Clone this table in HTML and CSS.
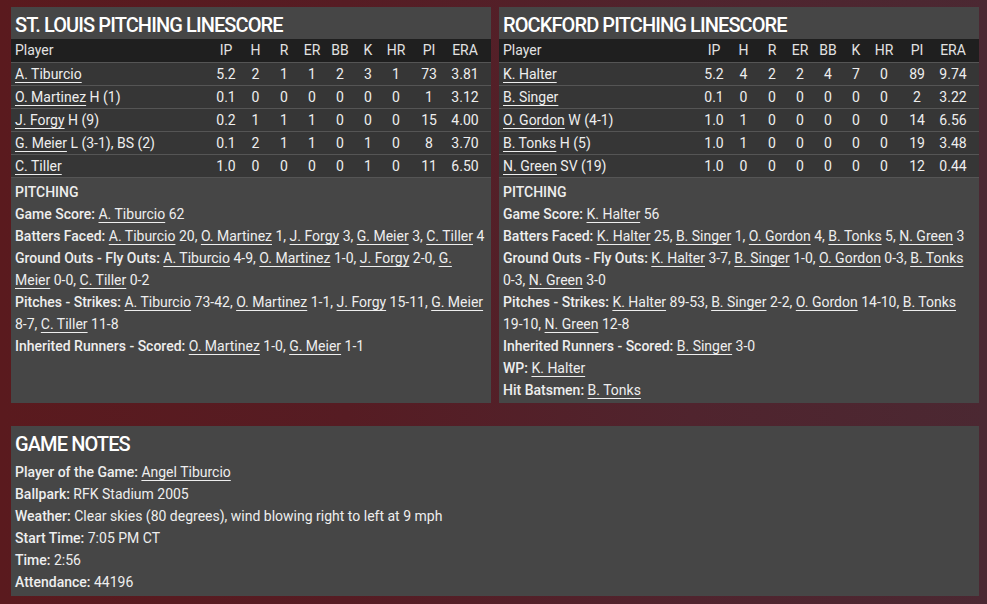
FILE: index.html
```html
<!DOCTYPE html>
<html lang="en">
<head>
<meta charset="utf-8">
<title>Pitching Linescore</title>
<link rel="stylesheet" href="styles.css">
</head>
<body>
<div class="page">
  <div class="top">
    <section class="panel">
      <h2 class="title">ST. LOUIS PITCHING LINESCORE</h2>
      <div class="table">
        <div class="row head"><span class="name">Player</span><span>IP</span><span>H</span><span>R</span><span>ER</span><span>BB</span><span>K</span><span>HR</span><span>PI</span><span>ERA</span></div>
        <div class="row"><span class="name"><a href="#">A. Tiburcio</a></span><span>5.2</span><span>2</span><span>1</span><span>1</span><span>2</span><span>3</span><span>1</span><span>73</span><span>3.81</span></div>
        <div class="row"><span class="name"><a href="#">O. Martinez</a> H (1)</span><span>0.1</span><span>0</span><span>0</span><span>0</span><span>0</span><span>0</span><span>0</span><span>1</span><span>3.12</span></div>
        <div class="row"><span class="name"><a href="#">J. Forgy</a> H (9)</span><span>0.2</span><span>1</span><span>1</span><span>1</span><span>0</span><span>0</span><span>0</span><span>15</span><span>4.00</span></div>
        <div class="row"><span class="name"><a href="#">G. Meier</a> L (3-1), BS (2)</span><span>0.1</span><span>2</span><span>1</span><span>1</span><span>0</span><span>1</span><span>0</span><span>8</span><span>3.70</span></div>
        <div class="row"><span class="name"><a href="#">C. Tiller</a></span><span>1.0</span><span>0</span><span>0</span><span>0</span><span>0</span><span>1</span><span>0</span><span>11</span><span>6.50</span></div>
      </div>
      <div class="info">
        <div class="line"><b>PITCHING</b></div>
        <div class="line"><b>Game Score:</b> <a href="#">A. Tiburcio</a> 62</div>
        <div class="line"><b>Batters Faced:</b> <a href="#">A. Tiburcio</a> 20, <a href="#">O. Martinez</a> 1, <a href="#">J. Forgy</a> 3, <a href="#">G. Meier</a> 3, <a href="#">C. Tiller</a> 4</div>
        <div class="line"><b>Ground Outs - Fly Outs:</b> <a href="#">A. Tiburcio</a> 4-9, <a href="#">O. Martinez</a> 1-0, <a href="#">J. Forgy</a> 2-0, <a href="#">G. Meier</a> 0-0, <a href="#">C. Tiller</a> 0-2</div>
        <div class="line"><b>Pitches - Strikes:</b> <a href="#">A. Tiburcio</a> 73-42, <a href="#">O. Martinez</a> 1-1, <a href="#">J. Forgy</a> 15-11, <a href="#">G. Meier</a> 8-7, <a href="#">C. Tiller</a> 11-8</div>
        <div class="line"><b>Inherited Runners - Scored:</b> <a href="#">O. Martinez</a> 1-0, <a href="#">G. Meier</a> 1-1</div>
      </div>
    </section>
    <section class="panel">
      <h2 class="title">ROCKFORD PITCHING LINESCORE</h2>
      <div class="table">
        <div class="row head"><span class="name">Player</span><span>IP</span><span>H</span><span>R</span><span>ER</span><span>BB</span><span>K</span><span>HR</span><span>PI</span><span>ERA</span></div>
        <div class="row"><span class="name"><a href="#">K. Halter</a></span><span>5.2</span><span>4</span><span>2</span><span>2</span><span>4</span><span>7</span><span>0</span><span>89</span><span>9.74</span></div>
        <div class="row"><span class="name"><a href="#">B. Singer</a></span><span>0.1</span><span>0</span><span>0</span><span>0</span><span>0</span><span>0</span><span>0</span><span>2</span><span>3.22</span></div>
        <div class="row"><span class="name"><a href="#">O. Gordon</a> W (4-1)</span><span>1.0</span><span>1</span><span>0</span><span>0</span><span>0</span><span>0</span><span>0</span><span>14</span><span>6.56</span></div>
        <div class="row"><span class="name"><a href="#">B. Tonks</a> H (5)</span><span>1.0</span><span>1</span><span>0</span><span>0</span><span>0</span><span>0</span><span>0</span><span>19</span><span>3.48</span></div>
        <div class="row"><span class="name"><a href="#">N. Green</a> SV (19)</span><span>1.0</span><span>0</span><span>0</span><span>0</span><span>0</span><span>0</span><span>0</span><span>12</span><span>0.44</span></div>
      </div>
      <div class="info">
        <div class="line"><b>PITCHING</b></div>
        <div class="line"><b>Game Score:</b> <a href="#">K. Halter</a> 56</div>
        <div class="line"><b>Batters Faced:</b> <a href="#">K. Halter</a> 25, <a href="#">B. Singer</a> 1, <a href="#">O. Gordon</a> 4, <a href="#">B. Tonks</a> 5, <a href="#">N. Green</a> 3</div>
        <div class="line"><b>Ground Outs - Fly Outs:</b> <a href="#">K. Halter</a> 3-7, <a href="#">B. Singer</a> 1-0, <a href="#">O. Gordon</a> 0-3, <a href="#">B. Tonks</a> 0-3, <a href="#">N. Green</a> 3-0</div>
        <div class="line"><b>Pitches - Strikes:</b> <a href="#">K. Halter</a> 89-53, <a href="#">B. Singer</a> 2-2, <a href="#">O. Gordon</a> 14-10, <a href="#">B. Tonks</a> 19-10, <a href="#">N. Green</a> 12-8</div>
        <div class="line"><b>Inherited Runners - Scored:</b> <a href="#">B. Singer</a> 3-0</div>
        <div class="line"><b>WP:</b> <a href="#">K. Halter</a></div>
        <div class="line"><b>Hit Batsmen:</b> <a href="#">B. Tonks</a></div>
      </div>
    </section>
  </div>
  <section class="panel notes">
    <h2 class="title">GAME NOTES</h2>
    <div class="info">
      <div class="line"><b>Player of the Game:</b> <a href="#">Angel Tiburcio</a></div>
      <div class="line"><b>Ballpark:</b> RFK Stadium 2005</div>
      <div class="line"><b>Weather:</b> Clear skies (80 degrees), wind blowing right to left at 9 mph</div>
      <div class="line"><b>Start Time:</b> 7:05 PM CT</div>
      <div class="line"><b>Time:</b> 2:56</div>
      <div class="line"><b>Attendance:</b> 44196</div>
    </div>
  </section>
</div>
</body>
</html>
```

FILE: styles.css
```css
* { box-sizing: border-box; }
html, body { margin: 0; padding: 0; }
body {
  width: 987px;
  height: 604px;
  overflow: hidden;
  font-family: Roboto, "Noto Sans", sans-serif;
  font-size: 14px;
  color: #eeeeee;
  background: linear-gradient(to right, #5a1a1e 0%, #561c23 35%, #50242e 70%, #4b2832 100%);
}
.page {
  padding: 7px 8px 0 11px;
  display: flex;
  flex-direction: column;
  gap: 23px;
}
.top {
  display: flex;
  gap: 8px;
  align-items: stretch;
}
.panel {
  background: #464646;
  width: 480px;
}
.notes {
  width: 968px;
  height: 170px;
}
.title {
  margin: 0;
  height: 32px;
  line-height: 36px;
  padding: 0 4px;
  font-size: 20px;
  font-weight: 500;
  letter-spacing: -0.9px;
  color: #ffffff;
  white-space: nowrap;
}
.table {
  border-bottom: 1px solid #555;
}
.row {
  display: grid;
  grid-template-columns: 1fr 30px 29px 28px 28px 28px 28px 28px 38px 34px;
  padding: 0 9px 0 4px;
  height: 23px;
  line-height: 22px;
  background: #363636;
  border-top: 1px solid #555;
}
.row span { text-align: center; white-space: nowrap; }
.row .name { text-align: left; }
.row.head {
  background: #1f1f1f;
  border-top: none;
  color: #e2e2e2;
}
a {
  color: inherit;
  text-decoration: underline;
  text-underline-offset: 3px;
  text-decoration-thickness: 1px;
}
.info {
  padding: 3px 4px 2px 4px;
}
.line {
  line-height: 22px;
}
.line b { font-weight: 500; }
```
